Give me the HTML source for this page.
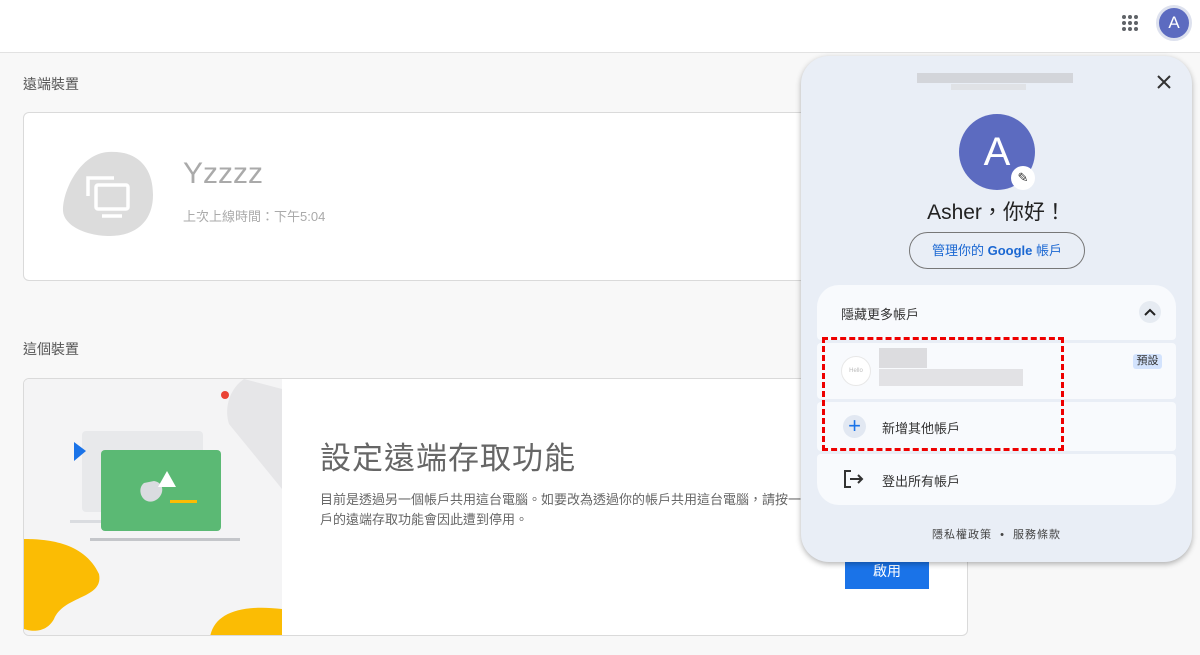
<!DOCTYPE html>
<html><head><meta charset="utf-8"><style>
*{margin:0;padding:0;box-sizing:border-box}
body{width:1200px;height:655px;background:#f8f8f8;font-family:"Liberation Sans","Noto Sans CJK TC",sans-serif;position:relative;overflow:hidden;color:#333}
.abs{position:absolute}
.hdr{left:0;top:0;width:1200px;height:53px;background:#fff;border-bottom:1px solid #e2e2e2}
.card{background:#fff;border:1px solid #dadada;border-radius:6px}
.pop{left:801px;top:56px;width:391px;height:506px;background:#e9eef6;border-radius:28px;box-shadow:0 2px 6px rgba(0,0,0,.3)}
.row{background:#f8fafd;left:16px;width:359px}
</style></head><body>
<div class="abs hdr"></div>
<svg class="abs" style="left:1120px;top:13px" width="20" height="20"><g fill="#5f6368"><circle cx="4" cy="4" r="2"/><circle cx="10" cy="4" r="2"/><circle cx="16" cy="4" r="2"/><circle cx="4" cy="10" r="2"/><circle cx="10" cy="10" r="2"/><circle cx="16" cy="10" r="2"/><circle cx="4" cy="16" r="2"/><circle cx="10" cy="16" r="2"/><circle cx="16" cy="16" r="2"/></g></svg>
<div class="abs" style="left:1156px;top:5px;width:36px;height:36px;border-radius:50%;background:#5c6bc0;border:3px solid #dde1ee;color:#fff;font-size:17px;text-align:center;line-height:30px">A</div>

<div class="abs" style="left:23px;top:74px;font-size:14px;color:#555">遠端裝置</div>
<div class="abs card" style="left:23px;top:112px;width:945px;height:169px"></div>
<svg class="abs" style="left:60px;top:150px" width="96" height="88"><path d="M48 2C75 0 93 15 93 45C93 72 75 86 50 86C25 86 3 75 3 60C3 40 20 4 48 2Z" fill="#dcdcdc"/><g fill="none" stroke="#fff" stroke-width="3.5"><path d="M28 46V28H54"/><rect x="36" y="35" width="32" height="24" rx="2"/><path d="M42 66H62"/></g></svg>
<div class="abs" style="left:183px;top:157px;font-size:30px;color:#aaa">Yzzzz</div>
<div class="abs" style="left:183px;top:206px;font-size:13px;color:#aaa">上次上線時間：下午5:04</div>

<div class="abs" style="left:23px;top:339px;font-size:14px;color:#555">這個裝置</div>
<div class="abs card" style="left:23px;top:378px;width:945px;height:258px;overflow:hidden">
<svg class="abs" style="left:0;top:0" width="258" height="258"><rect width="258" height="258" fill="#f4f4f5"/><path d="M258 10L220 0C205 10 200 30 205 45L258 110Z" fill="#e6e6e8"/><circle cx="201" cy="16" r="4" fill="#ea4335"/><rect x="58" y="52" width="121" height="81" rx="4" fill="#e8e9eb"/><rect x="46" y="141" width="40" height="3" fill="#dadce0"/><path d="M50 63L62 72L50 82Z" fill="#1a73e8"/><rect x="77" y="71" width="120" height="81" rx="4" fill="#5bb974"/><path d="M120 104C112 110 118 126 130 122C140 118 142 104 130 102Z" fill="#dadce0"/><path d="M143 92L134 108H152Z" fill="#fff"/><rect x="146" y="121" width="27" height="3" fill="#fbbc04"/><rect x="66" y="159" width="150" height="3" fill="#c4c6ca"/><path d="M0 160C20 160 60 162 75 195C80 220 40 216 30 240C20 258 0 250 0 250Z" fill="#fbbc04"/><path d="M186 258C190 235 215 225 258 230V258Z" fill="#fbbc04"/></svg>
</div>
<div class="abs" style="left:320px;top:433px;font-size:31px;color:#666;letter-spacing:1px">設定遠端存取功能</div>
<div class="abs" style="left:320px;top:490px;font-size:13px;line-height:20px;color:#666">目前是透過另一個帳戶共用這台電腦。如要改為透過你的帳戶共用這台電腦，請按一<br>戶的遠端存取功能會因此遭到停用。</div>
<div class="abs" style="left:845px;top:560px;width:84px;height:29px;background:#1a73e8;color:#fff;font-size:14px;text-align:center;line-height:22px">啟用</div>

<div class="abs pop">
<div class="abs" style="left:116px;top:17px;width:156px;height:10px;background:#d3d5da"></div>
<div class="abs" style="left:150px;top:28px;width:75px;height:6px;background:#e0e2e6"></div>
<svg class="abs" style="left:355px;top:18px" width="16" height="16"><path d="M2 2L14 14M14 2L2 14" stroke="#333" stroke-width="2"/></svg>
<div class="abs" style="left:158px;top:58px;width:76px;height:76px;border-radius:50%;background:#5c6bc0;color:#fff;font-size:40px;text-align:center;line-height:76px">A</div>
<div class="abs" style="left:210px;top:110px;width:24px;height:24px;border-radius:50%;background:#fff;text-align:center;font-size:13px;line-height:24px;color:#333">✎</div>
<div class="abs" style="left:0;top:140px;width:391px;text-align:center;font-size:21px;color:#222">Asher，你好！</div>
<div class="abs" style="left:108px;top:176px;width:176px;height:37px;border:1px solid #777;border-radius:19px;text-align:center;line-height:35px;font-size:13px;color:#1a67d2">管理你的 <b>Google</b> 帳戶</div>
<div class="abs row" style="top:229px;height:55px;border-radius:22px 22px 4px 4px"></div>
<div class="abs" style="left:40px;top:248px;font-size:13px;color:#333">隱藏更多帳戶</div>
<div class="abs" style="left:338px;top:245px;width:22px;height:22px;border-radius:50%;background:#e6ebf2;text-align:center"><svg width="12" height="22"><path d="M1 14L6 9L11 14" stroke="#222" stroke-width="2" fill="none"/></svg></div>
<div class="abs row" style="top:287px;height:56px;border-radius:4px"></div>
<div class="abs" style="left:40px;top:300px;width:30px;height:30px;border-radius:50%;background:#fff;border:1px solid #e8e8e8;font-size:6px;color:#bbb;text-align:center;line-height:28px">Hello</div>
<div class="abs" style="left:78px;top:292px;width:48px;height:20px;background:#dcdcdf"></div>
<div class="abs" style="left:78px;top:313px;width:144px;height:17px;background:#e2e2e5"></div>
<div class="abs" style="left:332px;top:298px;width:29px;height:15px;background:#d3e3fd;border-radius:3px;font-size:11px;text-align:center;line-height:15px;color:#333">預設</div>
<div class="abs row" style="top:346px;height:49px;border-radius:4px"></div>
<div class="abs" style="left:42px;top:359px;width:23px;height:23px;border-radius:50%;background:#e2e8f2;color:#1a73e8;font-size:22px;line-height:22px;text-align:center">+</div>
<div class="abs" style="left:81px;top:362px;font-size:13px;color:#333">新增其他帳戶</div>
<div class="abs row" style="top:398px;height:51px;border-radius:4px 4px 22px 22px"></div>
<svg class="abs" style="left:42px;top:413px" width="22" height="20"><path d="M8 2H2V18H8M7 10H19M15 6L19 10L15 14" stroke="#333" stroke-width="2" fill="none"/></svg>
<div class="abs" style="left:81px;top:415px;font-size:13px;color:#333">登出所有帳戶</div>
<div class="abs" style="left:0;top:470px;width:391px;text-align:center;font-size:11px;color:#444;letter-spacing:1px">隱私權政策 &nbsp;•&nbsp; 服務條款</div>
</div>
<div class="abs" style="left:822px;top:337px;width:242px;height:114px;border:3px dashed #e00"></div>
</body></html>
